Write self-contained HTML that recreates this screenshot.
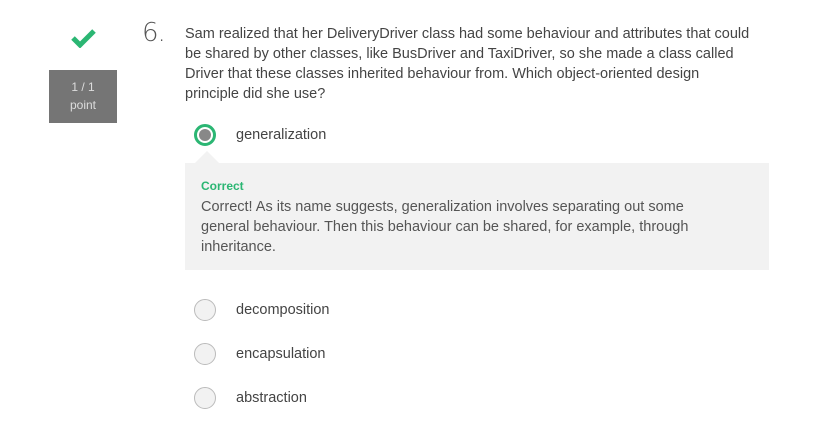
<!DOCTYPE html>
<html><head><meta charset="utf-8"><style>
*{margin:0;padding:0;box-sizing:border-box}
body{width:819px;height:430px;background:#fff;font-family:"Liberation Sans",sans-serif;color:#444;position:relative;overflow:hidden}
.abs{position:absolute}
.q{left:185px;top:24px;width:620px;font-size:14.5px;line-height:20px;color:#444;white-space:nowrap}
.num{left:142px;top:18px;font-size:26px;font-weight:300;color:#555;font-family:"DejaVu Sans","Liberation Sans",sans-serif;letter-spacing:-1px}
.badge{left:49px;top:70px;width:68px;height:53px;background:#757575;color:#ddd;font-size:12px;text-align:center;line-height:18px;padding-top:8px}
.radio{width:22px;height:22px;border-radius:50%;border:1px solid #bbb;background:#f2f2f2}
.sel{border:3px solid #2bb673;background:#fff}
.sel::after{content:"";position:absolute;left:2px;top:2px;width:12px;height:12px;border-radius:50%;background:#888}
.opt{font-size:14.5px;color:#444}
.box{left:185px;top:163px;width:584px;height:107px;background:#f2f2f2;padding:15px 16px 0 16px;font-size:14.5px;line-height:20px;color:#555;white-space:nowrap}
.tri{left:195px;top:151px;width:0;height:0;border-left:12px solid transparent;border-right:12px solid transparent;border-bottom:12px solid #f2f2f2}
</style></head><body>
<svg class="abs" style="left:71px;top:28px" width="25" height="20" viewBox="0 0 25 20"><path d="M2 10 L9 17 L23 3" fill="none" stroke="#2bb673" stroke-width="5"/></svg>
<div class="abs badge">1 / 1<br>point</div>
<div class="abs num">6.</div>
<div class="abs q">Sam realized that her DeliveryDriver class had some behaviour and attributes that could<br>be shared by other classes, like BusDriver and TaxiDriver, so she made a class called<br>Driver that these classes inherited behaviour from. Which object-oriented design<br>principle did she use?</div>
<div class="abs radio sel" style="left:194px;top:124px"></div>
<div class="abs opt" style="left:236px;top:127px">generalization</div>
<div class="abs tri"></div>
<div class="abs box"><div style="color:#2bb673;font-weight:bold;font-size:12px;line-height:17px">Correct</div><div style="margin-top:2px">Correct! As its name suggests, generalization involves separating out some<br>general behaviour. Then this behaviour can be shared, for example, through<br>inheritance.</div></div>
<div class="abs radio" style="left:194px;top:299px"></div>
<div class="abs opt" style="left:236px;top:302px">decomposition</div>
<div class="abs radio" style="left:194px;top:343px"></div>
<div class="abs opt" style="left:236px;top:346px">encapsulation</div>
<div class="abs radio" style="left:194px;top:387px"></div>
<div class="abs opt" style="left:236px;top:390px">abstraction</div>
</body></html>
